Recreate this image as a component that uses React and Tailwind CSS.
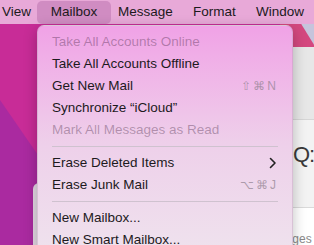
import React from "react";

const font = { fontFamily: '"Liberation Sans", Arial, sans-serif' };

function Item({ label, disabled, shortcut, arrow }) {
  return (
    <div className="flex h-[22px] items-center justify-between pl-[14px] pr-[14px]">
      <span className={disabled ? "text-[#3a1a38]/35" : "text-[#1d1a1d]"}>{label}</span>
      {shortcut && <span className="text-[12px] tracking-[2px] text-[#8e808e]/70">{shortcut}</span>}
      {arrow && (
        <svg width="8" height="12" viewBox="0 0 8 12" className="mr-[1px]">
          <path d="M1.5 1.5 L6 6 L1.5 10.5" fill="none" stroke="#222" strokeWidth="1.6" strokeLinecap="round" strokeLinejoin="round" />
        </svg>
      )}
    </div>
  );
}

function Sep() {
  return <div className="mx-[14px] my-[5px] h-px bg-[#cfc2cf]" />;
}

export default function App() {
  return (
    <div className="relative h-[245px] w-[314px] overflow-hidden text-[13.5px]" style={font}>
      {/* desktop */}
      <div className="absolute inset-0 bg-[#c82c97]" />
      <div className="absolute left-0 top-[100px] h-[145px] w-[80px] bg-[#aa2aa0] [clip-path:polygon(0_0,100%_80%,100%_100%,0_100%)]" />
      <div className="absolute left-[280px] top-[22px] h-[26px] w-[40px] bg-[#c6c4dc]" />
      <div className="absolute left-[280px] top-[22px] h-[26px] w-[40px] bg-[#d4487f] [clip-path:polygon(0_0,50%_0,90%_100%,0_100%)]" />
      {/* right window */}
      <div className="absolute left-[240px] top-[47px] h-[220px] w-[100px] bg-[#ececec]">
        <div className="h-[73px] border-b border-[#d6d6d6] bg-[#e7e7e7]" />
        <div className="h-[88px] border-b border-[#dadada] bg-[#f3f3f3] pl-[53px] pt-[24px] text-[22px] leading-none tracking-[-1px] text-[#3a3a3a]">Q:</div>
        <div className="bg-white pl-[17px] pt-[22px] text-[12px] text-[#8a8a8a]">Messages</div>
      </div>
      {/* left window */}
      <div className="absolute left-[33px] top-[183px] h-[80px] w-[80px] rounded-tl-[6px] bg-[#e2d8e2]" />
      {/* menu bar */}
      <div className="absolute left-0 top-0 flex h-[24px] w-full items-center bg-[#e8a9d8] text-[13.5px] text-[#1c1a1c]">
        <div className="w-[37px] pl-[2px]">View</div>
        <div className="flex h-[23px] w-[74px] items-center justify-center rounded-[5px] bg-[#d08cc2]">Mailbox</div>
        <div className="w-[82px] pl-[7px]">Message</div>
        <div className="w-[63px]">Format</div>
        <div>Window</div>
      </div>
      {/* dropdown */}
      <div className="absolute left-[37px] top-[25px] h-[240px] w-[256px] rounded-[7px] border border-[#b79ab4]/40 bg-gradient-to-b from-[#f0a2e6] via-[#eed0ea] to-[#efe4ee] pt-[5px] shadow-[0_4px_14px_rgba(0,0,0,0.25)]">
        <Item label="Take All Accounts Online" disabled />
        <Item label="Take All Accounts Offline" />
        <Item label="Get New Mail" shortcut="⇧⌘N" />
        <Item label="Synchronize “iCloud”" />
        <Item label="Mark All Messages as Read" disabled />
        <Sep />
        <Item label="Erase Deleted Items" arrow />
        <Item label="Erase Junk Mail" shortcut="⌥⌘J" />
        <Sep />
        <Item label="New Mailbox..." />
        <Item label="New Smart Mailbox..." />
      </div>
    </div>
  );
}
